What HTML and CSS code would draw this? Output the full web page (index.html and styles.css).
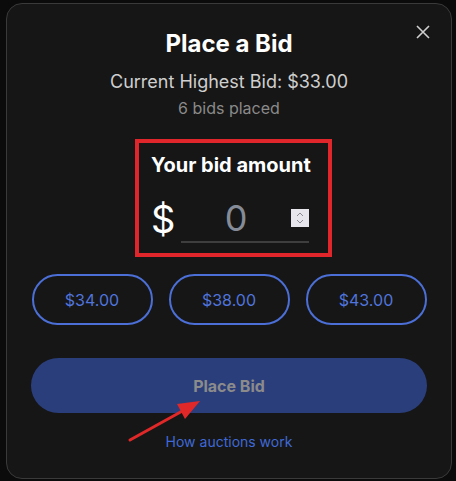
FILE: index.html
```html
<!DOCTYPE html>
<html lang="en">
<head>
    <meta charset="UTF-8">
    <meta name="viewport" content="width=device-width, initial-scale=1.0">
    <title>Place a Bid</title>
    <link rel="stylesheet" href="styles.css">
</head>
<body>
    <div class="modal">
        <button class="close" type="button" aria-label="Close">
            <svg width="16" height="16" viewBox="0 0 16 16">
                <path d="M2 2 L14 14 M14 2 L2 14" stroke="#cfcfcf" stroke-width="1.6" fill="none"/>
            </svg>
        </button>

        <h1 class="title">Place a Bid</h1>
        <p class="current">Current Highest Bid: $33.00</p>
        <p class="count">6 bids placed</p>

        <div class="bid-box">
            <label class="bid-label" for="bid">Your bid amount</label>
            <div class="bid-row">
                <span class="dollar">$</span>
                <div class="bid-input">
                    <span class="bid-value">0</span>
                    <span class="spinner">
                        <svg width="10" height="14" viewBox="0 0 10 14">
                            <path d="M2 5 L5 2 L8 5 M2 9 L5 12 L8 9" stroke="#8a8a95" stroke-width="1" fill="none"/>
                        </svg>
                    </span>
                </div>
            </div>
        </div>

        <div class="quick">
            <button class="quick-btn" type="button">$34.00</button>
            <button class="quick-btn" type="button">$38.00</button>
            <button class="quick-btn" type="button">$43.00</button>
        </div>

        <button class="place" type="button">Place Bid</button>
        <a class="how" href="#">How auctions work</a>

        <svg class="arrow" width="90" height="60" viewBox="0 0 90 60">
            <path d="M10 50 L66 19" stroke="#e02828" stroke-width="3" stroke-linecap="round" fill="none"/>
            <polygon points="80,11 57,14 65,29" fill="#e02828"/>
        </svg>
    </div>
</body>
</html>
```

FILE: styles.css
```css
body {
    font-family: Inter, "Noto Sans", sans-serif;
    background-color: #0b0b0b;
    margin: 0;
    padding: 0;
}

.modal {
    position: relative;
    box-sizing: border-box;
    width: 446px;
    height: 476px;
    margin: 3px 0 0 6px;
    padding: 25px 24px 0;
    background-color: #161616;
    border: 1.5px solid #3a3a3a;
    border-radius: 16px;
    display: flex;
    flex-direction: column;
    align-items: center;
}

.close {
    position: absolute;
    top: 20px;
    right: 20px;
    background: none;
    border: none;
    padding: 0;
    cursor: pointer;
}

.title {
    margin: 0;
    font-size: 24px;
    font-weight: 700;
    color: #ffffff;
    line-height: 29px;
}

.current {
    margin: 13px 0 0;
    font-size: 18px;
    color: #cfcfcf;
    line-height: 22px;
}

.count {
    margin: 5px 0 0;
    font-size: 16px;
    color: #8a8a8a;
    line-height: 20px;
}

.bid-box {
    box-sizing: border-box;
    width: 197px;
    height: 118px;
    margin-top: 21px;
    margin-left: 9px;
    border: 4px solid #e0262a;
    padding: 10px 19px 0 12px;
}

.bid-label {
    display: block;
    font-size: 20px;
    font-weight: 700;
    color: #ffffff;
    line-height: 24px;
    white-space: nowrap;
}

.bid-row {
    display: flex;
    align-items: center;
    gap: 8px;
    margin-top: 18px;
}

.dollar {
    width: 22px;
    font-size: 38px;
    color: #ffffff;
    line-height: 44px;
}

.bid-input {
    position: relative;
    flex: 1;
    height: 46px;
    padding-right: 18px;
    border-bottom: 2px solid #3e3e3e;
    display: flex;
    justify-content: center;
    align-items: center;
}

.bid-value {
    font-size: 36px;
    color: #858c97;
    line-height: 40px;
}

.spinner {
    position: absolute;
    right: 0;
    top: 14px;
    width: 18px;
    height: 18px;
    background-color: #e6e6ec;
    display: flex;
    align-items: center;
    justify-content: center;
}

.quick {
    display: flex;
    gap: 16px;
    margin-top: 17px;
    width: 395px;
}

.quick-btn {
    flex: 1;
    height: 51px;
    background: none;
    border: 2px solid #4b6fd6;
    border-radius: 26px;
    color: #4f74dc;
    font-family: Inter, "Noto Sans", sans-serif;
    font-size: 16px;
}

.place {
    width: 396px;
    height: 55px;
    margin-top: 33px;
    background-color: #2b3e7c;
    border: none;
    border-radius: 28px;
    color: #8b8b8b;
    font-family: Inter, "Noto Sans", sans-serif;
    font-size: 16px;
    font-weight: 700;
}

.how {
    margin-top: 20px;
    font-size: 14px;
    line-height: 17px;
    color: #3f69d6;
    text-decoration: none;
}

.arrow {
    position: absolute;
    left: 112.5px;
    top: 385.5px;
}
```
